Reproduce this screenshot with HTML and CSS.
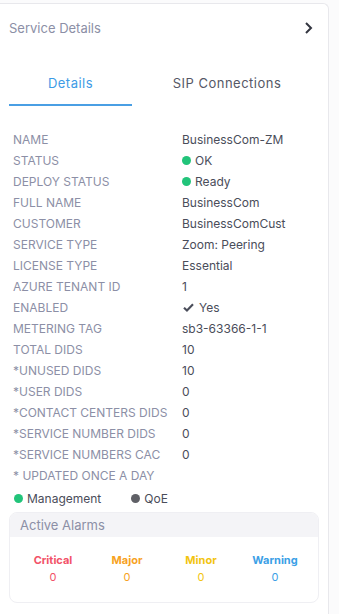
FILE: index.html
```html
<!DOCTYPE html>
<html lang="en">
<head>
    <meta charset="UTF-8">
    <meta name="viewport" content="width=device-width, initial-scale=1.0">
    <title>Service Details</title>
    <link rel="stylesheet" href="styles.css">
</head>
<body>
    <div class="panel">
        <div class="panel-header">
            <span class="panel-title">Service Details</span>
            <svg class="chevron" viewBox="0 0 10 14" xmlns="http://www.w3.org/2000/svg">
                <path d="M2 2l5 5-5 5"/>
            </svg>
        </div>

        <div class="tabs">
            <div class="tab active">Details</div>
            <div class="tab">SIP Connections</div>
        </div>

        <div class="details">
            <div class="label">NAME</div><div class="value">BusinessCom-ZM</div>
            <div class="label">STATUS</div><div class="value"><span class="dot green"></span>OK</div>
            <div class="label">DEPLOY STATUS</div><div class="value"><span class="dot green"></span>Ready</div>
            <div class="label">FULL NAME</div><div class="value">BusinessCom</div>
            <div class="label">CUSTOMER</div><div class="value">BusinessComCust</div>
            <div class="label">SERVICE TYPE</div><div class="value">Zoom: Peering</div>
            <div class="label">LICENSE TYPE</div><div class="value">Essential</div>
            <div class="label">AZURE TENANT ID</div><div class="value">1</div>
            <div class="label">ENABLED</div>
            <div class="value">
                <svg class="check" viewBox="0 0 12 10" xmlns="http://www.w3.org/2000/svg">
                    <path d="M1 5.2l3.3 3.1L11 1.5"/>
                </svg>Yes
            </div>
            <div class="label">METERING TAG</div><div class="value">sb3-63366-1-1</div>
            <div class="label">TOTAL DIDS</div><div class="value">10</div>
            <div class="label">*UNUSED DIDS</div><div class="value">10</div>
            <div class="label">*USER DIDS</div><div class="value">0</div>
            <div class="label">*CONTACT CENTERS DIDS</div><div class="value">0</div>
            <div class="label">*SERVICE NUMBER DIDS</div><div class="value">0</div>
            <div class="label">*SERVICE NUMBERS CAC</div><div class="value">0</div>
        </div>

        <div class="note">* UPDATED ONCE A DAY</div>

        <div class="legend">
            <span class="legend-item"><span class="dot green"></span>Management</span>
            <span class="legend-item"><span class="dot gray"></span>QoE</span>
        </div>

        <div class="alarms">
            <div class="alarms-header">Active Alarms</div>
            <div class="alarms-body">
                <div class="alarm critical"><span class="alarm-name">Critical</span><span class="alarm-count">0</span></div>
                <div class="alarm major"><span class="alarm-name">Major</span><span class="alarm-count">0</span></div>
                <div class="alarm minor"><span class="alarm-name">Minor</span><span class="alarm-count">0</span></div>
                <div class="alarm warning"><span class="alarm-name">Warning</span><span class="alarm-count">0</span></div>
            </div>
        </div>
    </div>
</body>
</html>
```

FILE: styles.css
```css
body {
    margin: 0;
    font-family: 'Inter', 'Roboto', sans-serif;
    background: #fbfbfc;
    overflow: hidden;
}
.panel {
    margin-top: 3px;
    width: 329px;
    min-height: 640px;
    background: #ffffff;
    border-top: 1px solid #e8e8ec;
    border-right: 1px solid #e8e8ec;
    border-top-right-radius: 6px;
    box-sizing: border-box;
}
.panel-header {
    display: flex;
    align-items: center;
    justify-content: space-between;
    height: 48px;
    padding: 0 14px 0 9px;
}
.panel-title {
    font-size: 13px;
    color: #8c8fa6;
}
.chevron {
    width: 10px;
    height: 14px;
    fill: none;
    stroke: #333640;
    stroke-width: 2;
}
.tabs {
    display: flex;
    margin: 10px 0 0 9px;
}
.tab {
    width: 123px;
    height: 42px;
    display: flex;
    align-items: center;
    justify-content: center;
    font-size: 13px;
    letter-spacing: 0.5px;
    color: #555866;
    border-bottom: 2px solid transparent;
}
.tab + .tab {
    width: 190px;
}
.tab.active {
    color: #3d9be6;
    border-bottom-color: #4a9fe4;
}
.details {
    display: grid;
    grid-template-columns: 169px 1fr;
    grid-auto-rows: 21px;
    align-items: center;
    margin-top: 23px;
    padding-left: 13px;
    font-size: 12px;
}
.label {
    color: #8c8fa6;
}
.value {
    color: #4a4d5a;
    display: flex;
    align-items: center;
}
.dot {
    display: inline-block;
    width: 9px;
    height: 9px;
    border-radius: 50%;
    margin-right: 4px;
}
.dot.green {
    background: #22c47a;
}
.dot.gray {
    background: #5f6066;
}
.check {
    width: 11px;
    height: 9px;
    margin: 0 5px 0 1px;
    fill: none;
    stroke: #4a4d5a;
    stroke-width: 2.4;
}
.note {
    padding-left: 13px;
    height: 22px;
    line-height: 22px;
    font-size: 12px;
    color: #8c8fa6;
}
.legend {
    display: flex;
    gap: 29px;
    padding-left: 13px;
    height: 22px;
    align-items: center;
    font-size: 12px;
    color: #4a4d5a;
}
.legend-item {
    display: flex;
    align-items: center;
}
.legend .dot {
    margin-left: 1px;
}
.alarms {
    margin: 3px 0 0 9px;
    width: 310px;
    border: 1px solid #efeff3;
    border-radius: 8px;
    overflow: hidden;
    box-sizing: border-box;
}
.alarms-header {
    background: #f4f4f7;
    height: 24px;
    line-height: 24px;
    padding-left: 10px;
    font-size: 13px;
    color: #8c8fa6;
}
.alarms-body {
    display: grid;
    grid-template-columns: repeat(4, 1fr);
    padding: 16px 6px 18px;
}
.alarm {
    display: flex;
    flex-direction: column;
    align-items: center;
    gap: 3px;
    font-size: 11px;
}
.alarm-name {
    font-weight: 700;
}
.critical { color: #f25268; }
.major { color: #f7a21e; }
.minor { color: #f2c40f; }
.warning { color: #3ba0e6; }
```
